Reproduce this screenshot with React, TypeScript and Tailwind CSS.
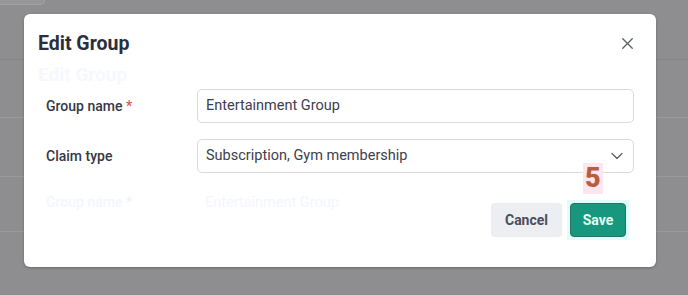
import { ChevronDown, X } from "lucide-react";

const font = { fontFamily: "Roboto, 'Liberation Sans', sans-serif" };

function Backdrop() {
  return (
    <div className="flex h-[295px] w-[688px] flex-col bg-[#8e8e90]">
      <div className="h-[60px] border-b border-[#858587]">
        <div className="h-[5px] w-[45px] rounded-br-md border-b border-r border-[#a2a2a4] bg-[#979799]" />
      </div>
      <div className="h-[58px] border-b border-[#9a9a9c]" />
      <div className="h-[59px] border-b border-[#9a9a9c]" />
      <div className="h-[55px] border-b border-[#9a9a9c]" />
    </div>
  );
}

function Field({
  label,
  required,
  children,
}: {
  label: string;
  required?: boolean;
  children: React.ReactNode;
}) {
  return (
    <div className="flex items-center">
      <label className="w-[159px] pl-[8px] text-[14px] font-medium text-[#353846]">
        {label}
        {required && <span className="text-[#e0535b]"> *</span>}
      </label>
      {children}
    </div>
  );
}

export default function App() {
  return (
    <div className="relative h-[295px] w-[688px] overflow-hidden" style={font}>
      <Backdrop />
      <div className="absolute left-[24px] top-[14px] flex h-[253px] w-[632px] flex-col rounded-[6px] bg-white pl-[14px] pr-[22px] shadow-[0_1px_3px_rgba(0,0,0,0.25)]">
        <div className="flex h-[58px] items-center justify-between pt-[1px]">
          <h2 className="text-[19.5px] font-bold text-[#2b2e3d]">Edit Group</h2>
          <button type="button" className="mr-[-3px] text-[#5b5d66]">
            <X size={19} strokeWidth={1.6} />
          </button>
        </div>
        <div className="h-[17px] -mt-[6px] text-[19px] font-bold leading-[17px] text-[#f6f7ff]">
          Edit Group
        </div>
        <div className="mt-[6px] flex flex-col gap-[16px]">
          <Field label="Group name" required>
            <div className="flex h-[34px] flex-1 items-center rounded-[5px] border border-[#d9dadd] px-[8px] text-[14.5px] text-[#3d404c]">
              Entertainment Group
            </div>
          </Field>
          <Field label="Claim type">
            <div className="flex h-[34px] flex-1 items-center justify-between rounded-[5px] border border-[#d9dadd] pl-[8px] pr-[6px] text-[14.5px] text-[#3d404c]">
              <span>Subscription, Gym membership</span>
              <ChevronDown size={20} strokeWidth={1.5} className="text-[#5b5d66]" />
            </div>
          </Field>
        </div>
        <div className="relative mt-[13px] flex items-start">
          <div className="flex w-[159px] pt-[6px] pl-[8px] text-[14px] font-medium text-[#f4f5ff]">
            Group name <span className="text-[#fdedf4]">&nbsp;*</span>
          </div>
          <div className="pt-[6px] pl-[8px] text-[14.5px] text-[#f4f5ff]">Entertainment Group</div>
          <div className="ml-auto mr-[8px] mt-[17px] flex gap-[8px]">
            <button
              type="button"
              className="h-[34px] w-[71px] rounded-[4px] bg-[#eceef2] text-[14px] font-bold text-[#4a4d5e]"
            >
              Cancel
            </button>
            <div className="relative">
              <span className="absolute -top-[40px] left-[13px] bg-[#fde6ef] px-[2px] text-[27px] font-black leading-[31px] text-[#b45f3e]">
                5
              </span>
              <div className="-m-[3px] bg-[#e0fdfc] p-[3px]">
                <button
                  type="button"
                  className="h-[34px] w-[56px] rounded-[4px] border border-[#2c7263] bg-[#17977d] text-[14px] font-bold text-[#e6fff6]"
                >
                  Save
                </button>
              </div>
            </div>
          </div>
        </div>
      </div>
    </div>
  );
}
